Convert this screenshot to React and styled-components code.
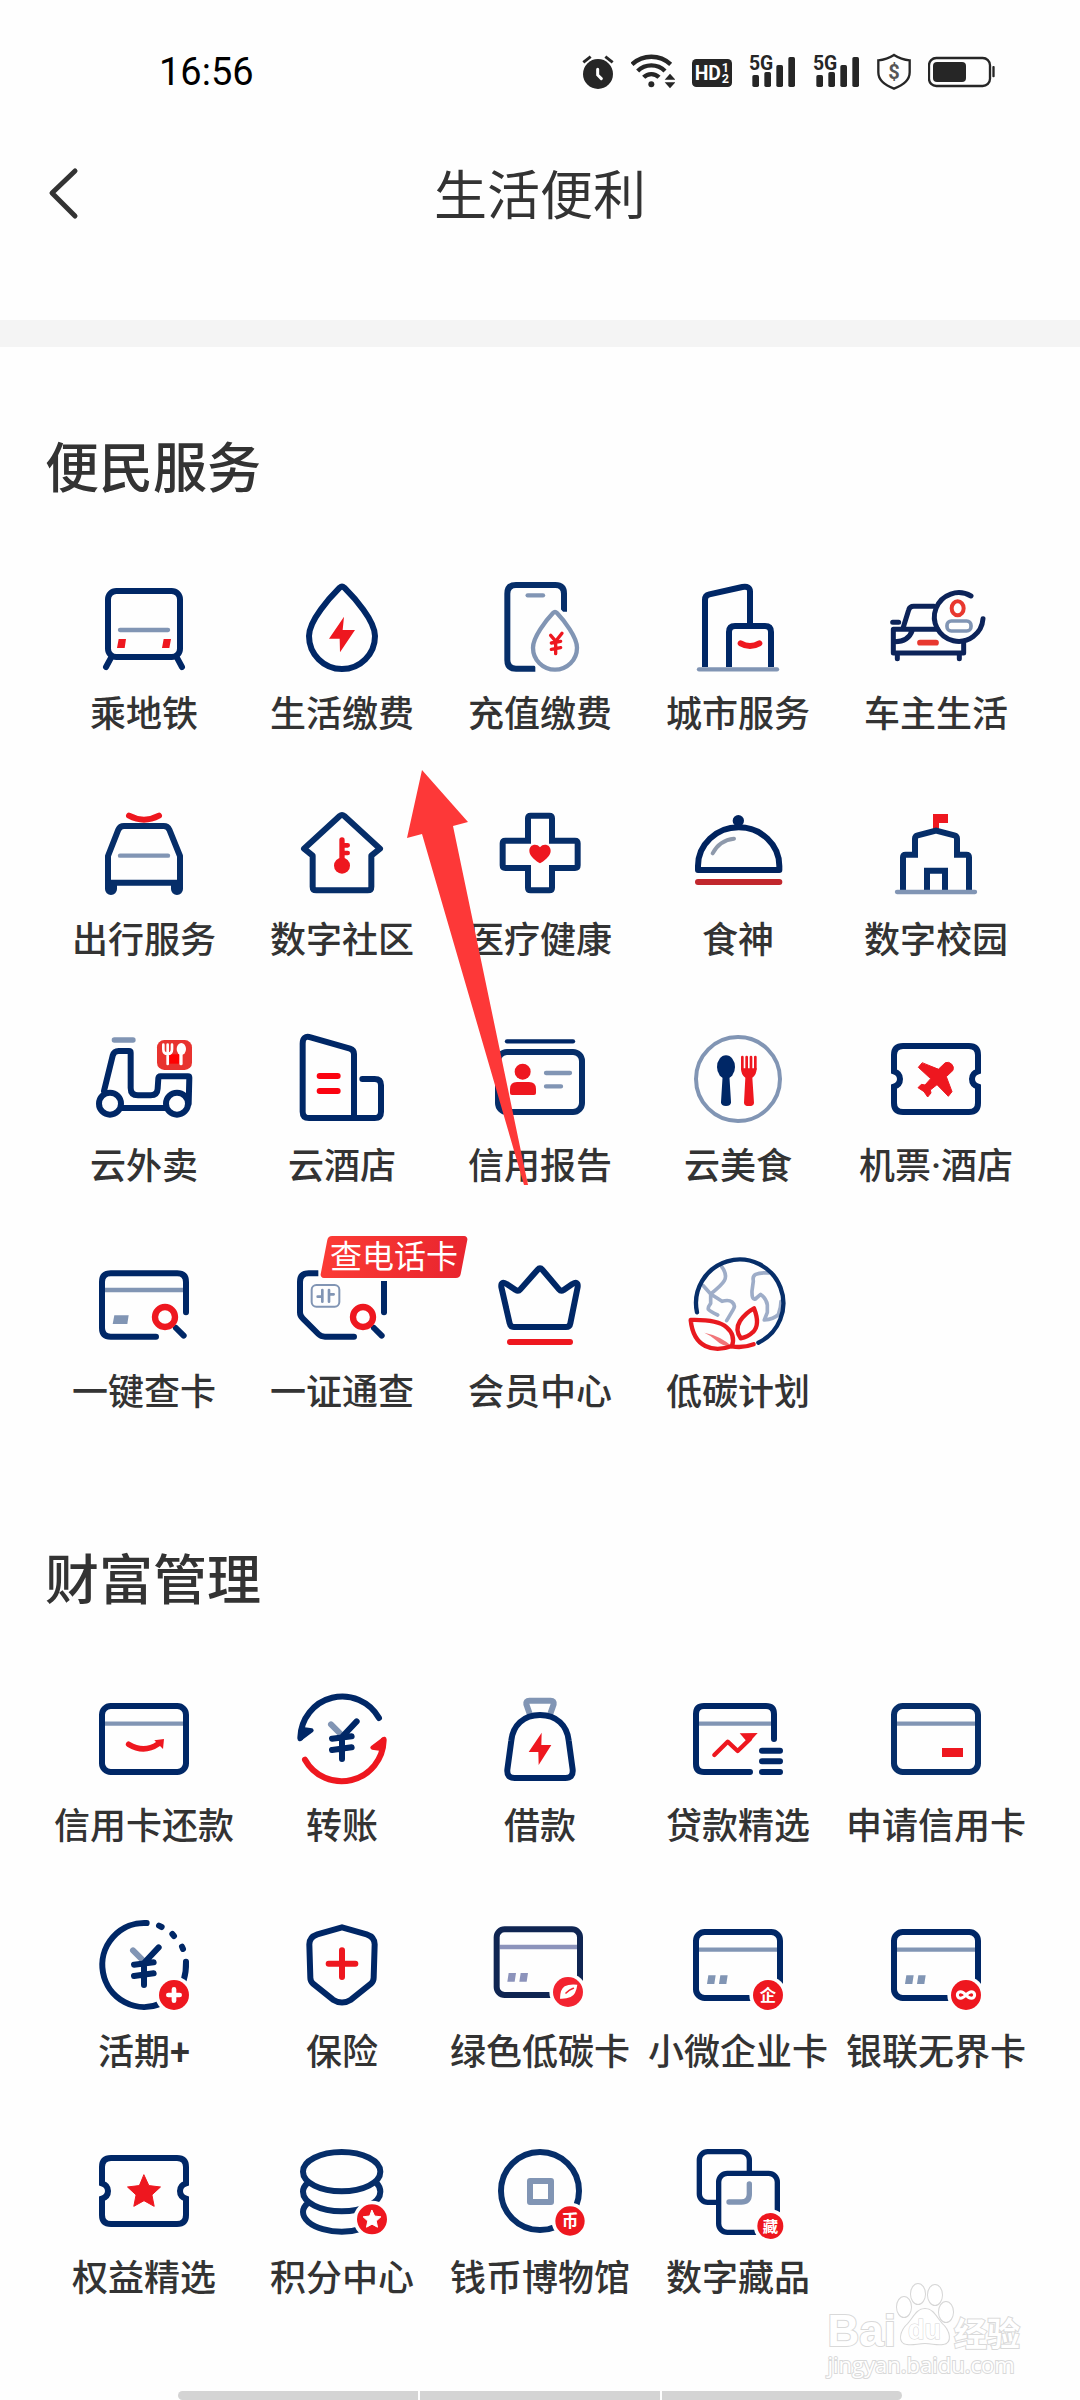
import React from "react";
import styled, { createGlobalStyle } from "styled-components";

const NAVY = "#002766";
const STEEL = "#8195b4";
const RED = "#ee171f";
const INK = "#262626";

const GlobalStyle = createGlobalStyle`
  * {
    box-sizing: border-box;
  }
  body {
    margin: 0;
    background: #fefefe;
    color: #333333;
    font-family: Roboto, "Noto Sans CJK SC", sans-serif;
  }
`;

const Page = styled.div`
  position: relative;
  display: flex;
  flex-direction: column;
  min-height: 100vh;
  overflow: hidden;
`;

const StatusBar = styled.div`
  display: flex;
  align-items: center;
  justify-content: space-between;
  height: 144px;
  padding: 0 85px 0 159px;
`;

const Time = styled.span`
  font-size: 38px;
  line-height: 44px;
  color: #000000;
`;

const StatusIcons = styled.div`
  display: flex;
  align-items: center;
  gap: 17px;
`;

const StatusSvg = styled.svg`
  display: block;
  height: 40px;
  fill: ${INK};
  stroke-linecap: round;
  text {
    font-family: "Liberation Sans Narrow", Roboto, sans-serif;
    font-weight: 700;
  }
`;

const Header = styled.header`
  display: grid;
  grid-template-columns: 120px 1fr 120px;
  align-items: center;
  height: 100px;
  margin-bottom: 76px;
`;

const BackButton = styled.button`
  height: 100px;
  padding: 0 0 0 46px;
  border: 0;
  background: none;
  svg {
    display: block;
  }
`;

const PageTitle = styled.h1`
  margin: 0;
  padding-top: 6px;
  font-size: 53px;
  line-height: 80px;
  font-weight: 400;
  text-align: center;
`;

const Band = styled.div`
  height: 27px;
  background: #f4f4f4;
`;

const Section = styled.section`
  padding: 93px 45px 46px;
`;

const SectionTitle = styled.h2`
  margin: 0 0 67px;
  font-size: 54px;
  line-height: 60px;
  font-weight: 500;
`;

const Grid = styled.div`
  display: grid;
  grid-template-columns: repeat(5, minmax(0, 1fr));
  row-gap: 58px;
`;

const Item = styled.a`
  display: flex;
  flex-direction: column;
  align-items: center;
  gap: 8px;
  color: inherit;
  text-decoration: none;
`;

const IconBox = styled.span`
  position: relative;
  display: block;
  width: 120px;
  height: 120px;
`;

const IconSvg = styled.svg`
  display: block;
  width: 100%;
  height: 100%;
  fill: none;
  stroke: ${props => props.$ink || NAVY};
  stroke-width: 18px;
  stroke-linecap: round;
  stroke-linejoin: round;
  text {
    fill: #ffffff;
    stroke: none;
    font-family: "Noto Sans CJK SC", sans-serif;
    font-weight: 700;
    text-anchor: middle;
  }
`;

const Label = styled.span`
  font-size: 36px;
  line-height: 40px;
  font-weight: 500;
  white-space: nowrap;
`;

const Tag = styled.span`
  position: absolute;
  top: -9px;
  left: 38px;
  z-index: 0;
  padding: 0 10px;
  font-size: 32px;
  line-height: 42px;
  color: #ffffff;
  white-space: nowrap;
  &::before {
    content: "";
    position: absolute;
    inset: 0 4px;
    z-index: -1;
    border-radius: 4px;
    background: linear-gradient(90deg, #fb3b35, #e9252e);
    transform: skewX(-11deg);
  }
`;

const Arrow = styled.svg`
  position: absolute;
  top: 770px;
  left: 407px;
  width: 122px;
  height: 416px;
  fill: #fd3838;
  pointer-events: none;
`;

const Watermark = styled.div`
  position: absolute;
  right: 60px;
  bottom: 22px;
  color: #ffffff;
  font-weight: 700;
  -webkit-text-stroke: 2px #d9d9d9;
  paint-order: stroke fill;
`;

const Brand = styled.div`
  display: flex;
  align-items: baseline;
  svg {
    display: block;
    fill: #ffffff;
    stroke: #d6d6d6;
  }
`;

const BrandWord = styled.span`
  font-family: "Liberation Sans", sans-serif;
  font-size: 44px;
  line-height: 36px;
`;

const BrandChinese = styled.span`
  font-family: "Noto Sans CJK SC", sans-serif;
  font-size: 33px;
  line-height: 36px;
`;

const Site = styled.div`
  font-family: "Open Sans", sans-serif;
  font-size: 22px;
  line-height: 28px;
  font-weight: 400;
`;

const GestureBar = styled.footer`
  display: grid;
  grid-template-columns: repeat(3, 1fr);
  gap: 2px;
  width: 67%;
  height: 9px;
  margin: auto auto 0;
  border-radius: 5px;
  overflow: hidden;
`;

const GesturePart = styled.span`
  background: #d4d4d4;
`;

/* ---- shared icon parts, all on a 360 x 360 box ---- */

const Svg = ({ ink, children }) => (
  <IconSvg viewBox="0 0 360 360" $ink={ink} aria-hidden="true">
    {children}
  </IconSvg>
);

const Card = ({ line = STEEL }) => (
  <>
    <path d="M63 134H297" stroke={line} strokeWidth="13" strokeLinecap="butt" />
    <rect x="54" y="81" width="252" height="198" rx="26" />
  </>
);

const Dashes = ({ x = 86, y = 211, color = STEEL }) => (
  <path
    d={`M${x + 5} ${y}h22l-4 26h-22zM${x + 41} ${y}h22l-4 26h-22z`}
    fill={color}
    stroke="none"
  />
);

const Badge = ({ x = 270, y = 270, r = 45, color = RED, children }) => (
  <>
    <circle cx={x} cy={y} r={r + 11} fill="#fefefe" stroke="none" />
    <circle cx={x} cy={y} r={r} fill={color} stroke="none" />
    {children}
  </>
);

const Yen = () => (
  <>
    <path d="M147 136L174 163" stroke={STEEL} />
    <path d="M224 127L180 174V240M150 179L209 172M150 213L209 205" />
  </>
);

const Ticket = () => (
  <path d="M54 157V108q0-27 27-27h198q27 0 27 27v49q-18 6-18 23t18 23v49q0 27-27 27H81q-27 0-27-27v-49q18-6 18-23t-18-23z" strokeLinejoin="miter" />
);

const Magnifier = () => (
  <>
    <path d="M276 249L299 272" />
    <circle cx="243" cy="216" r="30" stroke={RED} strokeWidth="19" />
  </>
);

const Star = ({ x, y, r, color }) => {
  const points = Array.from({ length: 10 }, (_, i) => {
    const radius = i % 2 ? r * 0.48 : r;
    const angle = (Math.PI / 5) * i - Math.PI / 2;
    return `${x + radius * Math.cos(angle)},${y + radius * Math.sin(angle)}`;
  });
  return <polygon points={points.join(" ")} fill={color} stroke={color} strokeWidth="3" />;
};

const icons = {
  metro: (
    <Svg>
      <path d="M80 274L66 300M280 274L294 300" />
      <rect x="72" y="72" width="216" height="198" rx="25" />
      <path d="M108 189h144" stroke={STEEL} strokeWidth="13" />
      <path d="M104 216h22l-4 27h-23zM239 216h22l-5 27h-22z" fill={RED} stroke="none" />
    </Svg>
  ),
  energy: (
    <Svg>
      <path d="M173 62q7-6 14 0C215 90 279 160 279 207a99 99 0 0 1-198 0C81 160 145 90 173 62z" />
      <path d="M186 149L141 215h32l1 41 45-67h-37z" fill={RED} stroke="none" />
    </Svg>
  ),
  topup: (
    <Svg ink="#062e69">
      <path d="M252 134V80q0-26-26-26H108q-26 0-26 26v199q0 26 26 26h58" strokeLinecap="butt" />
      <path d="M143 85h46" stroke={STEEL} strokeWidth="13" />
      <path d="M219 138q6-6 12 0C252 160 291 210 291 242a66 66 0 0 1-132 0C159 210 198 160 219 138z" stroke="#fefefe" strokeWidth="32" />
      <path d="M219 138q6-6 12 0C252 160 291 210 291 242a66 66 0 0 1-132 0C159 210 198 160 219 138z" fill="#fefefe" stroke={STEEL} strokeWidth="13" />
      <path d="M212 205l13 15M246 199L227 223v37M214 228l28-5M214 247l28-5" stroke={RED} strokeWidth="10" />
    </Svg>
  ),
  city: (
    <Svg>
      <path d="M81 300V98q0-13 13-16l99-22q23-4 23 14v95M153 300V195q0-18 18-18h90q18 0 18 18v105" strokeLinecap="butt" />
      <path d="M63 307h234" stroke={STEEL} strokeWidth="13" />
      <path d="M188 229q28 16 56 0" stroke={RED} />
    </Svg>
  ),
  car: (
    <Svg ink="#0c2359">
      <g strokeWidth="15">
        <path d="M174 118h-61q-12 0-15 11L81 184M52 187h133M52 187v71h211v-34M109 190q-12 34-52 34M50 166h18M64 262v13M250 262v13" />
        <path d="M285 87A73 73 0 1 0 321 155" />
      </g>
      <ellipse cx="245" cy="124" rx="18" ry="21" stroke="#e8382f" strokeWidth="12" />
      <rect x="213" y="162" width="72" height="30" rx="13" stroke={STEEL} strokeWidth="11" />
      <path d="M132 227h48" stroke="#e8382f" strokeWidth="17" />
    </Svg>
  ),
  taxi: (
    <Svg ink="#062e69">
      <path d="M135 68q45 24 90 0" stroke={RED} />
      <path d="M72 189L103 110q5-11 17-11h119q12 0 17 11l32 79v80H72z" />
      <path d="M63 262h36v26a18 18 0 0 1-36 0zM261 262h36v26a18 18 0 0 1-36 0z" fill="#062e69" stroke="none" />
      <path d="M108 188h144" stroke={STEEL} strokeWidth="13" />
    </Svg>
  ),
  community: (
    <Svg ink="#062e69">
      <path d="M173 69q7-6 14 0L294 167l-26 21v93q0 11-11 11H103q-11 0-11-11v-93L66 167z" />
      <path d="M180 141v72" stroke={RED} strokeWidth="16" />
      <path d="M184 157h13M184 180h13" stroke={RED} strokeWidth="14" />
      <circle cx="180" cy="218" r="24" fill={RED} stroke="none" />
    </Svg>
  ),
  medical: (
    <Svg ink="#062e69">
      <path d="M152 68h56q8 0 8 8v67h69q8 0 8 8v66q0 8-8 8h-69v59q0 8-8 8h-56q-8 0-8-8v-59H76q-8 0-8-8v-66q0-8 8-8h68V76q0-8 8-8z" strokeLinejoin="miter" />
      <path d="M180 211c-10-5-32-21-32-37 0-20 22-24 32-11 10-13 32-9 32 11 0 16-22 32-32 37z" fill={RED} stroke="none" />
    </Svg>
  ),
  dish: (
    <Svg ink="#00235e">
      <circle cx="181" cy="83" r="17" fill="#00235e" stroke="none" />
      <path d="M60 231v-12a122 116 0 0 1 244 0v12z" />
      <path d="M104 181Q125 141 168 137" stroke="#8e99ab" strokeWidth="12" />
      <path d="M60 267h244" stroke="#c1272d" />
    </Svg>
  ),
  campus: (
    <Svg ink="#062e69">
      <path d="M171 63h45v27h-27v20h-18z" fill={RED} stroke="none" />
      <path d="M81 292V193q0-8 8-8h28v-48q0-8 8-10l55-14 55 14q8 2 8 10v48h28q8 0 8 8v99M153 292v-59h54v59" strokeLinecap="butt" strokeLinejoin="miter" />
      <path d="M63 297h234" stroke={STEEL} strokeWidth="13" />
    </Svg>
  ),
  scooter: (
    <Svg>
      <path d="M91 63h56" stroke={STEEL} strokeWidth="16" />
      <path d="M60 216L86 110q4-14 18-14h31q5 0 5 5v106q0 22 22 22h38q20 0 21-20l2-31q1-6 6-6h83q4 0 4 4l-2 78M112 267h130" />
      <circle cx="78" cy="254" r="33" fill="#fefefe" />
      <circle cx="279" cy="254" r="33" fill="#fefefe" />
      <rect x="219" y="63" width="105" height="90" rx="22" fill="#e8332f" stroke="none" />
      <path d="M256 106h40v28h-40z" fill="#ff0000" stroke="none" />
      <path d="M238 77v14q0 14 13 14t13-14V77M251 77v58" stroke="#ffffff" strokeWidth="8" />
      <ellipse cx="292" cy="90" rx="14" ry="18" fill="#ffffff" stroke="none" />
      <path d="M291 100v34" stroke="#ffffff" strokeWidth="10" />
    </Svg>
  ),
  hotel: (
    <Svg>
      <path d="M241 180h37q19 0 19 19v79q0 19-19 19H81q-19 0-19-19V74q0-26 24-19l118 34q12 4 12 16v190" />
      <path d="M113 171h54M113 216h54" stroke="#fb0310" />
    </Svg>
  ),
  report: (
    <Svg ink="#062e69">
      <path d="M81 67h198" stroke={NAVY} strokeWidth="13" />
      <rect x="54" y="99" width="252" height="180" rx="27" />
      <circle cx="128" cy="158" r="24" fill={RED} stroke="none" />
      <path d="M90 222v-12q0-21 21-21h36q21 0 21 21v12q0 6-6 6H96q-6 0-6-6z" fill={RED} stroke="none" />
      <path d="M198 162h72M198 202h45" stroke={STEEL} strokeWidth="13" />
    </Svg>
  ),
  food: (
    <Svg>
      <circle cx="180" cy="180" r="126" stroke={STEEL} strokeWidth="12" />
      <ellipse cx="144" cy="144" rx="27" ry="35" fill={NAVY} stroke="none" />
      <path d="M134 170h20l5 80q0 11-15 11t-15-11z" fill={NAVY} stroke="none" />
      <path d="M193 114v36M206 114v36M219 114v36M232 114v36" stroke={RED} strokeWidth="8" />
      <path d="M189 148h47q0 20-13 28l5 75q0 10-15 10t-15-10l4-75q-13-8-13-28z" fill={RED} stroke="none" />
    </Svg>
  ),
  flight: (
    <Svg>
      <Ticket />
      <path
        d="M188 150L208 131A18 18 0 0 1 231 154L211 173 228 218 217 232 183 197 163 213 165 222 155 234 144 218 126 206 136 196 147 198 164 179 127 145 138 132z"
        fill={RED}
        stroke={RED}
        strokeWidth="3"
      />
    </Svg>
  ),
  cardSearch: (
    <Svg>
      <path d="M63 135H297" stroke={STEEL} strokeWidth="13" strokeLinecap="butt" />
      <path d="M306 202v-91q0-26-26-26H80q-26 0-26 26v138q0 26 26 26h136" />
      <path d="M91 211h43l-4 26H86z" fill={STEEL} stroke="none" />
      <Magnifier />
    </Svg>
  ),
  simSearch: (
    <Svg>
      <path d="M109 85H80q-26 0-26 26v91q0 11 8 18l47 47q8 8 20 8h87" />
      <path d="M306 117v85" />
      <path d="M306 108v20" strokeLinecap="butt" />
      <path d="M109 74h20v24h-20z" fill="#fefefe" stroke="none" />
      <g stroke={STEEL}>
        <rect x="89" y="120" width="83" height="65" rx="14" strokeWidth="6" />
        <path d="M121 135v35M107 155h14M141 135v35M141 148h14" strokeWidth="8" />
      </g>
      <Magnifier />
    </Svg>
  ),
  crown: (
    <Svg>
      <path d="M173 74q7-8 14 0l50 59q6 7 14 2l26-18q18-10 16 9l-22 109q-2 11-13 11H102q-11 0-13-11L64 126q-2-19 16-9l27 18q8 5 14-2z" />
      <path d="M90 291h180" stroke={RED} />
    </Svg>
  ),
  globe: (
    <Svg ink="#062e69">
      <g stroke="#9eadc8" strokeWidth="11">
        <path d="M131 65q18 24 8 42-8 14-41 40L76 122M98 147l34 22q20-6 30 2 12 10 4 22l-20 34M98 147v28q-9 12-7 18 4 6 28 17" />
        <path d="M273 84q-26-2-40 4-10 5-7 20l-4 30q-1 28 10 24l16-14q18 14 20 32v22l-9 23q28-2 42-16 8-22 8-40" />
      </g>
      <path d="M57 202A131 131 0 1 1 241 293" strokeWidth="13" />
      <g stroke="#e8191f" strokeWidth="13">
        <path d="M38 225q80-2 108 22 27 23 16 56-46 17-80 0Q44 284 38 225z" fill="#fefefe" />
        <path d="M228 190q20 50-4 72-14 14-36 18-18-26-2-52 16-24 42-38z" fill="#fefefe" />
        <path d="M161 304q34 6 66-6" />
      </g>
      <path d="M79 263q50 10 84 42-30 0-50-20-12-12-34-22z" fill="#e8191f" fillOpacity="0.6" stroke="none" />
    </Svg>
  ),
  repay: (
    <Svg>
      <Card />
      <path d="M134 196q46 28 88-1" stroke={RED} strokeWidth="17" />
      <path d="M211 184l29-4-3 30z" fill={RED} stroke="none" />
    </Svg>
  ),
  transfer: (
    <Svg>
      <path d="M291 117A126 126 0 0 0 55 176" />
      <path d="M53 181L89 154 62 150z" fill={NAVY} strokeWidth="12" />
      <g stroke={RED}>
        <path d="M69 242A126 126 0 0 0 305 184" />
        <path d="M307 179L271 206 298 210z" fill={RED} strokeWidth="12" />
      </g>
      <Yen />
    </Svg>
  ),
  loan: (
    <Svg>
      <path d="M149 104L139 76q-2-11 9-11h64q11 0 9 11l-10 28" stroke={STEEL} />
      <path d="M180 108C130 108 99 140 94 184L82 272q-2 25 22 25h152q24 0 22-25L266 184C261 140 230 108 180 108z" fill="#fefefe" />
      <path d="M185 161L146 219h29l1 39 38-60h-30z" fill={RED} stroke="none" />
    </Svg>
  ),
  loanPick: (
    <Svg>
      <path d="M63 134H279" stroke={STEEL} strokeWidth="13" strokeLinecap="butt" />
      <path d="M288 180v-75q0-24-24-24H78q-24 0-24 24v150q0 24 24 24h138" />
      <path d="M252 215h54M252 247h54M252 279h54" />
      <path d="M109 228L149 188 179 216 216 180" stroke={RED} strokeWidth="13" />
      <path d="M185 163L239 162 211 193z" fill={RED} stroke="none" />
    </Svg>
  ),
  applyCard: (
    <Svg ink="#062e69">
      <Card />
      <path d="M198 207h63v27h-63z" fill={RED} stroke="none" />
    </Svg>
  ),
  current: (
    <Svg>
      <path d="M188 54A126 126 0 1 0 232 295" />
      <path d="M225 62l8 4M265 87l5 6M294 125l3 7M306 170q1 30-7 56" />
      <Yen />
      <Badge>
        <path d="M253 270h34M270 253v34" stroke="#ffffff" strokeWidth="14" />
      </Badge>
    </Svg>
  ),
  insurance: (
    <Svg>
      <path d="M180 67l74 21q24 8 24 30l-3 100q0 10-8 18l-60 48q-27 17-54 0l-60-48q-8-8-8-18L82 118q0-22 24-30z" />
      <path d="M140 176h80M180 136v80" stroke={RED} />
    </Svg>
  ),
  greenCard: (
    <Svg ink="#0f2552">
      <path d="M59 126H291" stroke="#8c93bb" strokeWidth="13" strokeLinecap="butt" />
      <rect x="50" y="73" width="250" height="197" rx="24" />
      <Dashes x={81} y={204} color="#8c93bb" />
      <Badge x={264} y={261} color="#f32330">
        <path d="M240 281q0-28 14-37 14-8 38-5-4 30-20 37-14 6-32 5z" fill="#ffffff" stroke="none" />
        <path d="M258 264q10-10 22-14" stroke="#f32330" strokeWidth="5" />
      </Badge>
    </Svg>
  ),
  businessCard: (
    <Svg>
      <Card />
      <Dashes />
      <Badge>
        <text x="270" y="288" fontSize="49">企</text>
      </Badge>
    </Svg>
  ),
  unionCard: (
    <Svg>
      <Card />
      <Dashes />
      <Badge>
        <path d="M270 270c-6-7-10-10-16-10a10 10 0 0 0 0 20c6 0 10-4 16-10s10-10 16-10a10 10 0 0 1 0 20c-6 0-10-3-16-10z" stroke="#ffffff" strokeWidth="9" />
      </Badge>
    </Svg>
  ),
  rights: (
    <Svg>
      <Ticket />
      <Star x={180} y={184} r={52} color={RED} />
    </Svg>
  ),
  points: (
    <Svg ink="#062e69">
      <ellipse cx="179" cy="122" rx="116" ry="59" />
      <path d="M79 154q-16 13-16 28a116 59 0 0 0 232 0q0-15-13-28M79 215q-16 13-16 28A116 59 0 0 0 240 293" />
      <Badge y={265}>
        <Star x={270} y={266} r={28} color="#ffffff" />
      </Badge>
    </Svg>
  ),
  museum: (
    <Svg ink="#062e69">
      <circle cx="180" cy="180" r="117" />
      <rect x="150" y="150" width="63" height="63" stroke={STEEL} />
      <Badge r={44}>
        <text x="270" y="288" fontSize="50">币</text>
      </Badge>
    </Svg>
  ),
  collection: (
    <Svg>
      <g strokeWidth="16">
        <rect x="64" y="62" width="150" height="152" rx="25" />
        <rect x="122" y="127" width="176" height="177" rx="26" fill="#fefefe" />
        <path d="M214 159v30q0 24-24 24h-37" stroke={STEEL} />
      </g>
      <Badge x={277} y={285} r={39}>
        <text x="277" y="302" fontSize="46">藏</text>
      </Badge>
    </Svg>
  )
};

const services = [
  { icon: "metro", label: "乘地铁" },
  { icon: "energy", label: "生活缴费" },
  { icon: "topup", label: "充值缴费" },
  { icon: "city", label: "城市服务" },
  { icon: "car", label: "车主生活" },
  { icon: "taxi", label: "出行服务" },
  { icon: "community", label: "数字社区" },
  { icon: "medical", label: "医疗健康" },
  { icon: "dish", label: "食神" },
  { icon: "campus", label: "数字校园" },
  { icon: "scooter", label: "云外卖" },
  { icon: "hotel", label: "云酒店" },
  { icon: "report", label: "信用报告" },
  { icon: "food", label: "云美食" },
  { icon: "flight", label: "机票·酒店" },
  { icon: "cardSearch", label: "一键查卡" },
  { icon: "simSearch", label: "一证通查", tag: "查电话卡" },
  { icon: "crown", label: "会员中心" },
  { icon: "globe", label: "低碳计划" }
];

const wealth = [
  { icon: "repay", label: "信用卡还款" },
  { icon: "transfer", label: "转账" },
  { icon: "loan", label: "借款" },
  { icon: "loanPick", label: "贷款精选" },
  { icon: "applyCard", label: "申请信用卡" },
  { icon: "current", label: "活期+" },
  { icon: "insurance", label: "保险" },
  { icon: "greenCard", label: "绿色低碳卡" },
  { icon: "businessCard", label: "小微企业卡" },
  { icon: "unionCard", label: "银联无界卡" },
  { icon: "rights", label: "权益精选" },
  { icon: "points", label: "积分中心" },
  { icon: "museum", label: "钱币博物馆" },
  { icon: "collection", label: "数字藏品" }
];

const Signal = () => (
  <StatusSvg width="47" viewBox="0 0 141 120">
    <rect x="10" y="69" width="20" height="36" rx="5" />
    <rect x="46" y="60" width="20" height="45" rx="5" />
    <rect x="82" y="39" width="20" height="66" rx="5" />
    <rect x="118" y="15" width="20" height="90" rx="5" />
    <text x="0" y="54" fontSize="58" stroke="#fefefe" strokeWidth="5" paintOrder="stroke">
      5G
    </text>
  </StatusSvg>
);

const ServiceSection = ({ title, items }) => (
  <Section>
    <SectionTitle>{title}</SectionTitle>
    <Grid>
      {items.map(item => (
        <Item href="#" key={item.label}>
          <IconBox>
            {icons[item.icon]}
            {item.tag && <Tag>{item.tag}</Tag>}
          </IconBox>
          <Label>{item.label}</Label>
        </Item>
      ))}
    </Grid>
  </Section>
);

export default function App() {
  return (
    <Page>
      <GlobalStyle />
      <StatusBar>
        <Time>16:56</Time>
        <StatusIcons>
          <StatusSvg width="32" viewBox="0 0 96 120">
            <circle cx="48" cy="66" r="45" />
            <path d="M4 31L26 14M70 14L92 31" stroke={INK} strokeWidth="9" strokeLinecap="butt" />
            <path d="M47 52v17l11 11" fill="none" stroke="#ffffff" strokeWidth="9" />
          </StatusSvg>
          <StatusSvg width="44" viewBox="0 0 132 120">
            <g fill="none" stroke={INK} strokeWidth="13" strokeLinecap="butt">
              <path d="M3 37A85 85 0 0 1 119 37" />
              <path d="M20 57A58 58 0 0 1 102 57" />
              <path d="M38 76A32 32 0 0 1 84 76" />
            </g>
            <circle cx="61" cy="97" r="9" />
            <path d="M117 65l16 18h-32zM117 109l16-18h-32z" stroke="#fefefe" strokeWidth="5" paintOrder="stroke" />
          </StatusSvg>
          <StatusSvg width="40" viewBox="0 0 120 120">
            <rect y="21" width="120" height="84" rx="13" />
            <g fill="#ffffff">
              <text x="8" y="84" fontSize="58">HD</text>
              <text x="89" y="60" fontSize="38">1</text>
              <text x="89" y="94" fontSize="38">2</text>
            </g>
          </StatusSvg>
          <Signal />
          <Signal />
          <StatusSvg width="34" viewBox="0 0 102 120">
            <path d="M51 9q22 14 47 16v36q0 32-47 49Q4 93 4 61V25Q29 23 51 9z" fill="none" stroke={INK} strokeWidth="7" />
            <text x="51" y="80" fontSize="60" fill="#555555" textAnchor="middle">$</text>
          </StatusSvg>
          <StatusSvg width="67" viewBox="0 0 201 120">
            <rect x="3" y="18" width="183" height="84" rx="22" fill="none" stroke={INK} strokeWidth="7" />
            <rect x="15" y="30" width="99" height="60" rx="12" />
            <rect x="193" y="42" width="7" height="34" rx="3" />
          </StatusSvg>
        </StatusIcons>
      </StatusBar>
      <Header>
        <BackButton aria-label="返回">
          <svg width="34" height="54" viewBox="0 0 34 54" fill="none" stroke="#333333" strokeWidth="5" strokeLinecap="round" strokeLinejoin="round">
            <path d="M29 4L6 26 29 49" />
          </svg>
        </BackButton>
        <PageTitle>生活便利</PageTitle>
      </Header>
      <Band />
      <ServiceSection title="便民服务" items={services} />
      <ServiceSection title="财富管理" items={wealth} />
      <GestureBar>
        <GesturePart />
        <GesturePart />
        <GesturePart />
      </GestureBar>
      <Arrow viewBox="0 0 122 416">
        <path d="M15 0L61 52 46 56 121 415H117L15 64 0 68z" />
      </Arrow>
      <Watermark>
        <Brand>
          <BrandWord>Bai</BrandWord>
          <svg width="58" height="63" viewBox="0 0 58 63">
            <g strokeWidth="2">
              <ellipse cx="8" cy="24" rx="7" ry="10" />
              <ellipse cx="22" cy="11" rx="7" ry="10" />
              <ellipse cx="39" cy="12" rx="7" ry="10" />
              <ellipse cx="50" cy="29" rx="7" ry="10" />
              <path d="M29 26c8 0 11 8 17 15 8 7 10 19 1 20-6 1-11-1-18-1s-12 2-18 1c-9-1-7-13 1-20 6-7 9-15 17-15z" />
            </g>
            <text x="12" y="56" fontFamily="Liberation Sans" fontSize="27">du</text>
          </svg>
          <BrandChinese>经验</BrandChinese>
        </Brand>
        <Site>jingyan.baidu.com</Site>
      </Watermark>
    </Page>
  );
}
